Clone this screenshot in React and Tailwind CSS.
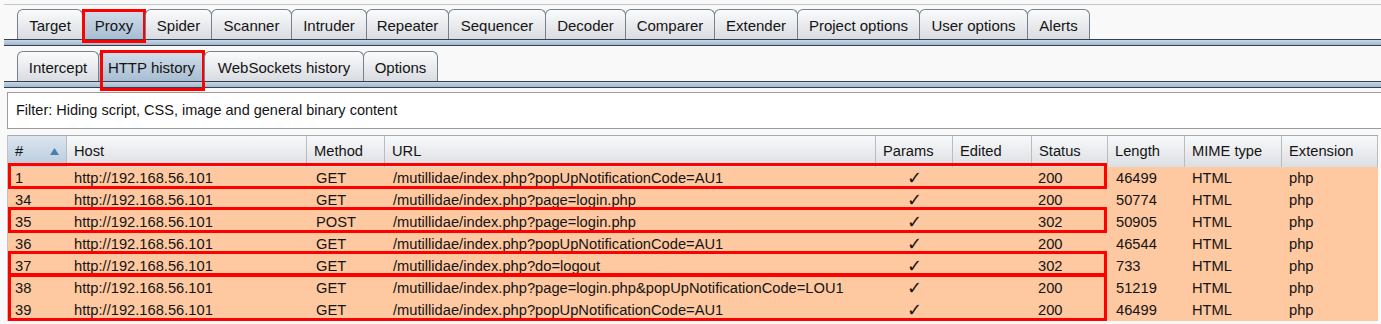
import React from 'react';

const mainTabs = [
  { label: 'Target', w: 'w-[66px]' },
  { label: 'Proxy', w: 'w-[64px]', active: true, marked: true },
  { label: 'Spider', w: 'w-[67px]' },
  { label: 'Scanner', w: 'w-[81px]' },
  { label: 'Intruder', w: 'w-[76px]' },
  { label: 'Repeater', w: 'w-[83px]' },
  { label: 'Sequencer', w: 'w-[98px]' },
  { label: 'Decoder', w: 'w-[81px]' },
  { label: 'Comparer', w: 'w-[90px]' },
  { label: 'Extender', w: 'w-[84px]' },
  { label: 'Project options', w: 'w-[123px]' },
  { label: 'User options', w: 'w-[109px]' },
  { label: 'Alerts', w: 'w-[63px]' },
];

const subTabs = [
  { label: 'Intercept', w: 'w-[82px]' },
  { label: 'HTTP history', w: 'w-[107px]', active: true, marked: true },
  { label: 'WebSockets history', w: 'w-[160px]' },
  { label: 'Options', w: 'w-[75px]' },
];

const columns = ['#', 'Host', 'Method', 'URL', 'Params', 'Edited', 'Status', 'Length', 'MIME type', 'Extension'];

const rows = [
  { id: '1', method: 'GET', url: '/mutillidae/index.php?popUpNotificationCode=AU1', status: '200', length: '46499' },
  { id: '34', method: 'GET', url: '/mutillidae/index.php?page=login.php', status: '200', length: '50774' },
  { id: '35', method: 'POST', url: '/mutillidae/index.php?page=login.php', status: '302', length: '50905' },
  { id: '36', method: 'GET', url: '/mutillidae/index.php?popUpNotificationCode=AU1', status: '200', length: '46544' },
  { id: '37', method: 'GET', url: '/mutillidae/index.php?do=logout', status: '302', length: '733' },
  { id: '38', method: 'GET', url: '/mutillidae/index.php?page=login.php&popUpNotificationCode=LOU1', status: '200', length: '51219' },
  { id: '39', method: 'GET', url: '/mutillidae/index.php?popUpNotificationCode=AU1', status: '200', length: '46499' },
];

const gridCols = 'grid grid-cols-[59px_240px_78px_491px_77px_79px_76px_77px_97px_1fr]';

const Tab = ({ tab, markClass }) => (
  <div
    className={`relative ${tab.w} -ml-px h-[30px] pt-[4px] flex items-center justify-center border border-b-0 border-[#74818f] rounded-t-[6px] text-[15px] ${
      tab.active ? 'bg-linear-to-b from-[#d2dfeb] to-[#a8bdd3]' : 'bg-linear-to-b from-[#fbfbfc] to-[#d9dce1]'
    }`}
  >
    {tab.label}
    {tab.marked && <div className={`absolute border-[3px] border-[#ff0000] ${markClass}`} />}
  </div>
);

const Band = () => (
  <div className="border-y border-[#34424f] h-[7px] bg-linear-to-b from-[#c7d6e6] to-[#a3b8cf]" />
);

const App = () => {
  return (
    <div className="w-[1381px] h-[324px] overflow-hidden bg-[#f9f9f9] text-[#141414] font-['Liberation_Sans',Arial,sans-serif]">
      <div className="pl-[4px] pt-[4px]">
        <div className="border-t border-[#c6c6c6]">
          <div className="flex pl-[14px] pt-[4px]">
            {mainTabs.map((t) => (
              <Tab key={t.label} tab={t} markClass="-top-px -left-px -right-px -bottom-[4px]" />
            ))}
          </div>
          <Band />
          <div className="flex pl-[14px] pt-[5px]">
            {subTabs.map((t) => (
              <Tab key={t.label} tab={t} markClass="-top-[2px] left-[1px] -right-px -bottom-[10px]" />
            ))}
          </div>
          <Band />
        </div>

        <div className="ml-[3px] mt-[4px] w-[1400px] h-[37px] border border-[#9c9c9c] bg-white flex items-center pl-[8px] text-[14.5px]">
          Filter: Hiding script, CSS, image and general binary content
        </div>

        <div className="ml-[3px] mt-[6px] w-[1371px] border-l border-[#c2c2c2] text-[14.7px]">
          <div className={`${gridCols} h-[32px] border-t border-[#a9a9a9]`}>
            {columns.map((c, i) => (
              <div
                key={c}
                className={`flex items-center pl-[7px] border-r border-[#b9bdc2] ${
                  i === 0
                    ? 'justify-between pr-[7px] bg-linear-to-b from-[#dbe5ef] to-[#b9cbdd]'
                    : 'bg-linear-to-b from-[#f8f9fa] to-[#dcdfe3]'
                }`}
              >
                {c}
                {i === 0 && (
                  <svg width="9" height="7" viewBox="0 0 9 7">
                    <path d="M4.5 0 L9 7 L0 7 Z" fill="#4b7db3" />
                  </svg>
                )}
              </div>
            ))}
          </div>

          <div className="relative">
            {rows.map((r) => (
              <div key={r.id} className={`${gridCols} h-[22px] items-center bg-[#fec8a0]`}>
                <div className="pl-[7px]">{r.id}</div>
                <div className="pl-[7px]">http://192.168.56.101</div>
                <div className="pl-[9px]">{r.method}</div>
                <div className="pl-[8px]">{r.url}</div>
                <div className="text-center leading-none font-['DejaVu_Sans',sans-serif] text-[18px]">✓</div>
                <div />
                <div className="pl-[6px]">{r.status}</div>
                <div className="pl-[8px]">{r.length}</div>
                <div className="pl-[7px]">HTML</div>
                <div className="pl-[7px]">php</div>
              </div>
            ))}
            <div className="absolute left-0 w-[1099px] top-[-4px] h-[26px] border-[3px] border-[#ff0000]" />
            <div className="absolute left-0 w-[1099px] top-[40px] h-[26px] border-[3px] border-[#ff0000]" />
            <div className="absolute left-0 w-[1099px] top-[84px] h-[26px] border-[3px] border-[#ff0000]" />
            <div className="absolute left-0 w-[1099px] top-[106px] h-[48px] border-[3px] border-[#ff0000]" />
          </div>
        </div>
      </div>
    </div>
  );
};

export default App;
